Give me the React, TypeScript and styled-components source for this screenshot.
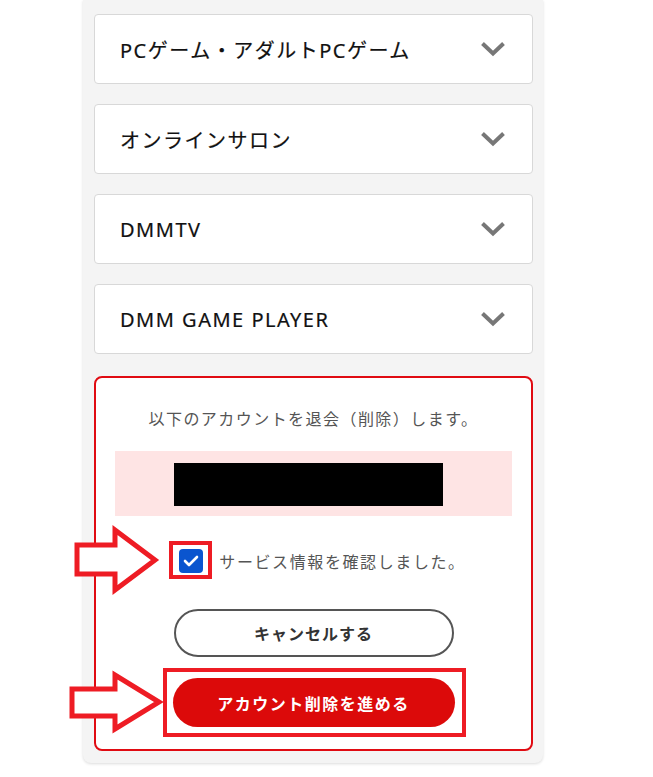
import React from "react";
import styled, { createGlobalStyle } from "styled-components";

const GlobalStyle = createGlobalStyle`
  html, body { margin: 0; padding: 0; background: #ffffff; }
  body { font-family: "Noto Sans", "Noto Sans CJK JP", sans-serif; }
  * { box-sizing: border-box; }
`;

const Page = styled.div`
  position: relative;
  width: 653px;
  height: 777px;
  overflow: hidden;
`;

const Panel = styled.div`
  margin-left: 83px;
  width: 460px;
  background: #f4f4f4;
  padding: 14px 10px 12px 11px;
  border-radius: 0 0 8px 8px;
  box-shadow: 0 1px 3px rgba(0, 0, 0, 0.14);
  display: flex;
  flex-direction: column;
  gap: 20px;
`;

const Card = styled.div`
  height: 70px;
  background: #ffffff;
  border: 1px solid #d8d8d8;
  border-radius: 4px;
  display: flex;
  align-items: center;
  justify-content: space-between;
  padding: 0 26px 0 25px;
`;

const CardTitle = styled.span`
  font-family: "Noto Sans", "Noto Sans CJK JP", sans-serif;
  font-size: 20px;
  font-weight: 400;
  letter-spacing: 1.5px;
  color: #111;
  -webkit-text-stroke: 0.2px #111;
`;

const Chevron = styled.svg`
  width: 26px;
  height: 16px;
  display: block;
`;

const DangerBox = styled.div`
  margin-top: 2px;
  border: 2px solid #e00b12;
  border-radius: 8px;
  background: #ffffff;
  padding: 28px 19px 22px 19px;
  display: flex;
  flex-direction: column;
  align-items: center;
`;

const Notice = styled.p`
  margin: 0;
  font-family: "Noto Sans CJK JP", sans-serif;
  font-size: 16px;
  line-height: 24px;
  letter-spacing: 1.45px;
  color: #555;
`;

const AccountBox = styled.div`
  margin-top: 21px;
  align-self: stretch;
  height: 65px;
  background: #fee4e4;
  display: flex;
  align-items: center;
  justify-content: center;
  padding-right: 10px;
  padding-top: 2px;
`;

const Redacted = styled.div`
  width: 269px;
  height: 43px;
  background: #000;
`;

const CheckRow = styled.label`
  margin-top: 33px;
  display: flex;
  align-items: center;
  gap: 16px;
  margin-left: 18px;
`;

const CheckWrap = styled.span`
  position: relative;
  display: block;
  width: 24px;
  height: 24px;
`;

const CheckBox = styled.span`
  display: flex;
  width: 24px;
  height: 24px;
  border-radius: 4px;
  background: #0a55cf;
  align-items: center;
  justify-content: center;
`;

const Highlight = styled.span<{ $inset: string }>`
  position: absolute;
  inset: ${(p) => p.$inset};
  border: 4px solid #ee1c24;
  pointer-events: none;
`;

const CheckLabel = styled.span`
  font-family: "Noto Sans CJK JP", sans-serif;
  font-size: 16px;
  letter-spacing: 1.6px;
  color: #555;
`;

const ButtonWrap = styled.div<{ $gap: number }>`
  position: relative;
  margin-top: ${(p) => p.$gap}px;
`;

const Button = styled.button<{ $primary?: boolean }>`
  display: block;
  width: ${(p) => (p.$primary ? "282px" : "280px")};
  height: ${(p) => (p.$primary ? "49px" : "48px")};
  border-radius: 25px;
  border: ${(p) => (p.$primary ? "none" : "2px solid #555")};
  background: ${(p) => (p.$primary ? "#dc0a0a" : "#fff")};
  color: ${(p) => (p.$primary ? "#fff" : "#333")};
  font-family: "Noto Sans CJK JP", sans-serif;
  font-size: 16px;
  font-weight: 700;
  letter-spacing: ${(p) => (p.$primary ? "1.5px" : "1px")};
  padding: 0;
  cursor: pointer;
`;

const Arrow = styled.svg<{ $left: number; $top: number }>`
  position: absolute;
  left: ${(p) => p.$left}px;
  top: ${(p) => p.$top}px;
  overflow: visible;
`;

const ChevronIcon = () => (
  <Chevron viewBox="0 0 26 16">
    <path d="M2.5 2.5 L13 12.5 L23.5 2.5" fill="none" stroke="#777" strokeWidth="4" />
  </Chevron>
);

const services = [
  "PCゲーム・アダルトPCゲーム",
  "オンラインサロン",
  "DMMTV",
  "DMM GAME PLAYER",
];

export default function App() {
  return (
    <Page>
      <GlobalStyle />
      <Panel>
        {services.map((s) => (
          <Card key={s}>
            <CardTitle>{s}</CardTitle>
            <ChevronIcon />
          </Card>
        ))}
        <DangerBox>
          <Notice>以下のアカウントを退会（削除）します。</Notice>
          <AccountBox>
            <Redacted />
          </AccountBox>
          <CheckRow>
            <CheckWrap>
              <CheckBox>
                <svg width="16" height="12" viewBox="0 0 16 12">
                  <path d="M2 6 L6 10 L14 2" fill="none" stroke="#fff" strokeWidth="2.6" strokeLinecap="round" strokeLinejoin="round" />
                </svg>
              </CheckBox>
              <Highlight $inset="-8px -9px -6px -10px" />
            </CheckWrap>
            <CheckLabel>サービス情報を確認しました。</CheckLabel>
          </CheckRow>
          <ButtonWrap $gap={36}>
            <Button>キャンセルする</Button>
          </ButtonWrap>
          <ButtonWrap $gap={21}>
            <Button $primary>アカウント削除を進める</Button>
            <Highlight $inset="-10px -11px -10px -10px" />
          </ButtonWrap>
        </DangerBox>
      </Panel>
      <Arrow $left={73} $top={526} width="88" height="70" viewBox="0 0 88 70">
        <polygon points="4,19 42,19 42,4 82,34 42,64 42,48 4,48" fill="#fff" stroke="#ee1c24" strokeWidth="5" strokeLinejoin="miter" />
      </Arrow>
      <Arrow $left={68} $top={671} width="96" height="62" viewBox="0 0 96 62">
        <polygon points="4,18 47,18 47,4 91,31 47,58 47,45 4,45" fill="#fff" stroke="#ee1c24" strokeWidth="5" strokeLinejoin="miter" />
      </Arrow>
    </Page>
  );
}
